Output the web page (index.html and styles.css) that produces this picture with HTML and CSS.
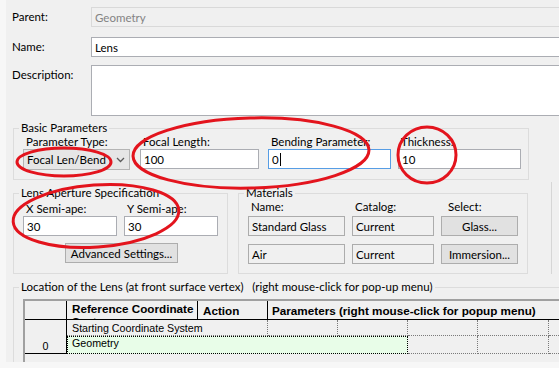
FILE: index.html
```html
<!DOCTYPE html>
<html lang="en">
  <head>
    <meta charset="UTF-8" />
    <title>Lens Properties</title>
    <link rel="stylesheet" href="styles.css">
  </head>
  <body>
    <div class="dialog">
      <!-- General -->
      <div class="row">
        <span class="row-label">Parent:</span>
        <div class="field field-disabled">Geometry</div>
      </div>
      <div class="row row-name">
        <span class="row-label">Name:</span>
        <div class="field">Lens</div>
      </div>
      <div class="row row-desc">
        <span class="row-label">Description:</span>
        <div class="field field-area"></div>
      </div>

      <!-- Basic Parameters -->
      <fieldset class="group group-basic">
        <legend>Basic Parameters</legend>
        <div class="basic-grid">
          <div class="col col-type">
            <span class="cap">Parameter Type:</span>
            <div class="combo">
              <span>Focal Len/Bend</span>
              <svg class="chevron" width="9" height="6" viewBox="0 0 9 6">
                <polyline points="1,1 4.5,4.5 8,1" fill="none" stroke="#5a5a5a" stroke-width="1.3" />
              </svg>
            </div>
          </div>
          <div class="col col-focal">
            <span class="cap">Focal Length:</span>
            <div class="field">100</div>
          </div>
          <div class="col col-bend">
            <span class="cap">Bending Parameter:</span>
            <div class="field field-focus">0<span class="caret"></span></div>
          </div>
          <div class="col col-thick">
            <span class="cap">Thickness:</span>
            <div class="field">10</div>
          </div>
        </div>
      </fieldset>

      <div class="pair">
        <!-- Aperture -->
        <fieldset class="group group-aperture">
          <legend>Lens Aperture Specification</legend>
          <div class="aperture-grid">
            <span class="cap">X Semi-ape:</span>
            <span class="cap">Y Semi-ape:</span>
            <div class="field">30</div>
            <div class="field">30</div>
          </div>
          <div class="button button-advanced">Advanced Settings...</div>
        </fieldset>

        <!-- Materials -->
        <fieldset class="group group-materials">
          <legend>Materials</legend>
          <div class="materials-grid">
            <span class="cap">Name:</span>
            <span class="cap">Catalog:</span>
            <span class="cap cap-select">Select:</span>
            <div class="field field-readonly">Standard Glass</div>
            <div class="field field-readonly">Current</div>
            <div class="button">Glass...</div>
            <div class="field field-readonly">Air</div>
            <div class="field field-readonly">Current</div>
            <div class="button">Immersion...</div>
          </div>
        </fieldset>

        <div class="pair-edge"></div>
      </div>

      <!-- Location table -->
      <fieldset class="group group-location">
        <legend>Location of the Lens (at front surface vertex)   (right mouse-click for pop-up menu)</legend>
        <div class="grid">
          <div class="th"></div>
          <div class="th th-wrap">Reference Coordinate System</div>
          <div class="th">Action</div>
          <div class="th th-params">Parameters (right mouse-click for popup menu)</div>

          <div class="row-head">0</div>
          <div class="td td-start">Starting Coordinate System</div>
          <div class="td"></div>
          <div class="td"></div>
          <div class="td"></div>
          <div class="td"></div>
          <div class="td td-last"></div>

          <div class="td td-current">Geometry</div>
          <div class="td td-low"></div>
          <div class="td td-low"></div>
          <div class="td td-low td-last"></div>
        </div>
      </fieldset>
    </div>

    <!-- Red annotation marks drawn over the dialog -->
    <svg class="marks" width="559" height="368" viewBox="0 0 559 368">
      <g fill="none" stroke="#e3141d" stroke-width="3">
        <ellipse cx="64" cy="162" rx="47" ry="14" />
        <ellipse cx="251" cy="153" rx="118" ry="35" transform="rotate(-1.5 251 153)" />
        <ellipse cx="427" cy="155" rx="29" ry="28" />
        <ellipse cx="96" cy="216" rx="83" ry="31" transform="rotate(-4 96 216)" />
      </g>
    </svg>
  </body>
</html>
```

FILE: styles.css
```css
body {
  margin: 0;
  width: 559px;
  height: 368px;
  overflow: hidden;
  position: relative;
  background: #f7f7f7;
  color: #000;
  font-family: Lato, "Liberation Sans", sans-serif;
  font-size: 11.5px;
}

.dialog {
  width: 640px;
  height: 362px;
  margin-left: 6px;
  padding: 7px 0 0 6px;
  box-sizing: border-box;
  background: #f0f0f0;
  overflow: hidden;
}

/* label + field rows */
.row {
  display: flex;
  height: 20px;
  margin-bottom: 10px;
}

.row-name {
  margin-bottom: 8px;
}

.row-desc {
  height: 51px;
  margin-bottom: 5px;
}

.row-label {
  width: 79px;
  line-height: 20px;
}

.row .field {
  flex: 1;
  height: 100%;
}

.field {
  height: 20px;
  box-sizing: border-box;
  border: 1px solid #abadb3;
  background: #fff;
  padding-left: 3px;
  display: flex;
  align-items: center;
  white-space: nowrap;
}

.field-disabled {
  border-color: #d9d9d9;
  background: #f0f0f0;
  color: #838383;
}

.field-area {
  align-items: flex-start;
}

.field-focus {
  border-color: #569de5;
}

.field-readonly {
  background: #f0f0f0;
  border-color: #acacac;
}

.caret {
  display: inline-block;
  width: 1px;
  height: 13px;
  margin-left: 1px;
  background: #000;
}

/* group boxes */
.group {
  margin: 0 0 0 1px;
  padding: 0;
  border: 1px solid #dcdcdc;
  box-sizing: border-box;
  min-width: 0;
}

.group legend {
  margin-left: 5px;
  padding: 0 2px;
  line-height: 14px;
  white-space: pre;
}

.cap {
  display: block;
  line-height: 14px;
  padding-left: 3px;
  white-space: nowrap;
}

.group-basic {
  width: 516px;
}

.basic-grid {
  display: flex;
  padding: 0 0 9px 9px;
}

.col-type {
  width: 107px;
}

.col-focal {
  width: 119px;
  margin-left: 10px;
}

.col-bend {
  width: 123px;
  margin-left: 9px;
}

.col-thick {
  width: 123px;
  margin-left: 7px;
}

.combo {
  height: 21px;
  box-sizing: border-box;
  border: 1px solid #b4b4b4;
  background: #e6e6e6;
  padding: 0 4px 0 3px;
  display: flex;
  align-items: center;
  justify-content: space-between;
}

.pair {
  display: flex;
  margin-top: 6px;
}

.group-aperture {
  width: 215px;
}

.aperture-grid {
  display: grid;
  grid-template-columns: 94px 94px;
  column-gap: 7px;
  padding: 2px 0 0 9px;
}

.button {
  height: 20px;
  box-sizing: border-box;
  border: 1px solid #adadad;
  background: #e1e1e1;
  display: flex;
  align-items: center;
  justify-content: center;
  white-space: nowrap;
}

.button-advanced {
  width: 113px;
  margin: 7px 0 8px 51px;
}

.group-materials {
  width: 290px;
  margin-left: 10px;
}

.materials-grid {
  display: grid;
  grid-template-columns: 97px 82px 77px;
  grid-template-rows: 16px 28px 20px;
  column-gap: 7px;
  align-items: start;
  padding: 0 0 8px 9px;
}

.cap-select {
  padding-left: 7px;
}

.pair-edge {
  width: 1px;
  height: 92px;
  margin: -4px 0 0 23px;
  background: #d6d6d6;
}

.group-location {
  width: 620px;
  height: 120px;
  margin-top: 6px;
}

/* location grid */
.grid {
  display: grid;
  grid-template-columns: 42px 131px 70px 70px 70px 70px 71px 60px;
  grid-template-rows: 19px 16px 18px 30px;
  margin: 5px 0 0 9px;
  border-left: 2px solid #a0a0a0;
  border-top: 2px solid #a0a0a0;
  font-family: "Liberation Sans", Arial, sans-serif;
  font-size: 10.7px;
}

.th {
  border-right: 1px solid #000;
  border-bottom: 1px solid #000;
  padding-left: 5px;
  font-size: 11.7px;
  font-weight: bold;
  display: flex;
  align-items: center;
  white-space: nowrap;
  overflow: hidden;
}

.th-wrap {
  display: block;
  white-space: normal;
  line-height: 13px;
  padding-top: 1px;
}

.th-params {
  grid-column: 4 / 9;
  border-right: none;
  padding-left: 4px;
}

.row-head {
  grid-row: 2 / 4;
  border-right: 1px solid #000;
  border-bottom: 1px solid #000;
  display: flex;
  align-items: flex-end;
  justify-content: center;
  padding-bottom: 1px;
}

.td {
  border-right: 1px dotted #7a7a7a;
  border-bottom: 1px dotted #7a7a7a;
  padding-left: 5px;
  display: flex;
  align-items: center;
  white-space: nowrap;
}

.td-start {
  grid-column: 2 / 4;
}

.td-last {
  border-right: none;
}

.td-current {
  grid-column: 2 / 6;
  background: #e8fde8;
  border: 1px dotted #000;
  padding-left: 4px;
  align-items: flex-start;
}

.marks {
  position: absolute;
  top: 0;
  left: 0;
  pointer-events: none;
}
```
